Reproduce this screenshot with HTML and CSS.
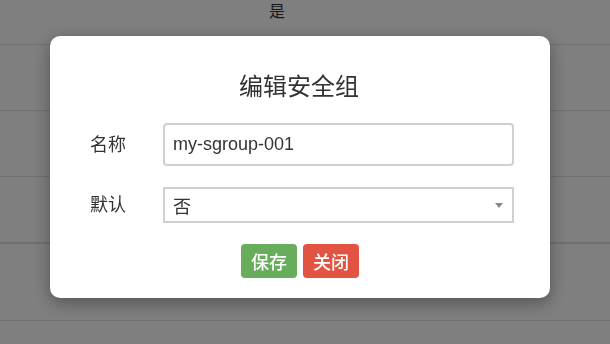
FILE: index.html
```html
<!DOCTYPE html>
<html lang="zh-CN">
<head>
    <meta charset="UTF-8">
    <meta name="viewport" content="width=device-width, initial-scale=1.0">
    <title>编辑安全组</title>
    <link rel="stylesheet" href="styles.css">
</head>
<body>
    <table class="group-table">
        <tr class="first-row"><td>是</td></tr>
        <tr><td></td></tr>
        <tr><td></td></tr>
        <tr class="last-row"><td></td></tr>
        <tr class="extra-row"><td></td></tr>
    </table>

    <div class="overlay">
        <div class="modal">
            <h2 class="modal-title">编辑安全组</h2>
            <div class="form-row">
                <label class="form-label">名称</label>
                <input class="form-input" type="text" value="my-sgroup-001">
            </div>
            <div class="form-row">
                <label class="form-label">默认</label>
                <div class="form-select">
                    <span>否</span>
                    <span class="select-arrow"></span>
                </div>
            </div>
            <div class="modal-actions">
                <button class="btn btn-save">保存</button>
                <button class="btn btn-close">关闭</button>
            </div>
        </div>
    </div>
</body>
</html>
```

FILE: styles.css
```css
* {
    margin: 0;
    padding: 0;
    box-sizing: border-box;
}

body {
    font-family: "Liberation Sans", "Noto Sans CJK SC", sans-serif;
    background: #fff;
    color: #333;
    overflow: hidden;
}

.group-table {
    width: 100%;
    border-collapse: collapse;
}

.group-table td {
    height: 66px;
    border-bottom: 1px solid #e0e0e0;
    text-align: center;
    font-size: 16px;
    color: #333;
}

.first-row td {
    height: 44px;
    vertical-align: top;
    line-height: 24px;
    padding-right: 56px;
}

.last-row td {
    height: 67px;
    border-bottom: 2px solid #e0e0e0;
}

.extra-row td {
    height: 77px;
}

.overlay {
    position: fixed;
    inset: 0;
    background: rgba(0, 0, 0, 0.5);
    padding: 36px 0 0 50px;
}

.modal {
    width: 500px;
    background: #fff;
    border-radius: 10px;
    box-shadow: 0 5px 18px rgba(0, 0, 0, 0.35);
    padding: 34px 36px 20px 40px;
}

.modal-title {
    font-size: 24px;
    font-weight: normal;
    line-height: 34px;
    text-align: center;
    color: #333;
    margin-bottom: 19px;
    padding-right: 6px;
}

.form-row {
    display: flex;
    align-items: center;
    margin-bottom: 21px;
}

.form-label {
    width: 73px;
    font-size: 18px;
    color: #333;
    margin-top: -4px;
}

.form-input {
    flex: 1;
    height: 43px;
    border: 2px solid #d0d0d0;
    border-radius: 4px;
    padding: 0 8px;
    font-family: inherit;
    font-size: 18px;
    color: #333;
    outline: none;
}

.form-select {
    flex: 1;
    height: 36px;
    border: 2px solid #d0d0d0;
    padding: 0 9px 0 8px;
    display: flex;
    align-items: center;
    justify-content: space-between;
    font-size: 18px;
    color: #333;
}

.select-arrow {
    width: 0;
    height: 0;
    border-left: 4px solid transparent;
    border-right: 4px solid transparent;
    border-top: 5px solid #888;
}

.modal-actions {
    display: flex;
    justify-content: center;
    gap: 6px;
    padding-right: 4px;
}

.btn {
    height: 34px;
    padding: 0 10px;
    border: none;
    border-radius: 4px;
    color: #fff;
    font-family: inherit;
    font-size: 18px;
    font-weight: 500;
    cursor: pointer;
}

.btn-save {
    background: #67ad5b;
}

.btn-close {
    background: #e25441;
}
```
